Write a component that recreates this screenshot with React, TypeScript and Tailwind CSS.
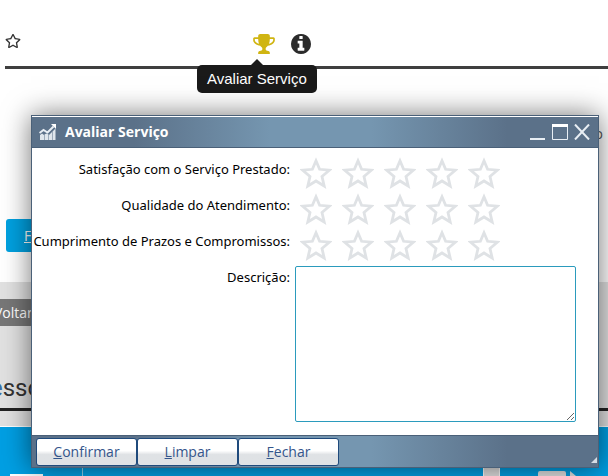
import { FaRegStar } from "react-icons/fa";

const criteria = [
  { id: "servico", label: "Satisfação com o Serviço Prestado:" },
  { id: "atendimento", label: "Qualidade do Atendimento:" },
  { id: "prazos", label: "Cumprimento de Prazos e Compromissos:" },
];

const actions = ["Confirmar", "Limpar", "Fechar"];

function TrophyIcon() {
  return (
    <svg viewBox="64 128 1664 1536" className="h-5 w-[22px]" fill="currentColor" aria-hidden="true">
      <path d="M522 883q-74-162-74-371h-256v96q0 78 94.5 162t235.5 113zm1078-275v-96h-256q0 209-74 371 141-29 235.5-113t94.5-162zm128-128v128q0 71-41.5 143t-112 130-173 97.5-215.5 44.5q-42 54-95 95-38 34-52.5 72.5t-14.5 89.5q0 54 30.5 91t97.5 37q75 0 133.5 45.5t58.5 114.5v64q0 14-9 23t-23 9h-832q-14 0-23-9t-9-23v-64q0-69 58.5-114.5t133.5-45.5q67 0 97.5-37t30.5-91q0-51-14.5-89.5t-52.5-72.5q-53-41-95-95-113-5-215.5-44.5t-173-97.5-112-130-41.5-143v-128q0-40 28-68t68-28h288v-96q0-66 47-113t113-47h576q66 0 113 47t47 113v96h288q40 0 68 28t28 68z" />
    </svg>
  );
}

function InfoIcon() {
  return (
    <svg viewBox="128 128 1536 1536" className="h-5 w-5" fill="currentColor" aria-hidden="true">
      <path d="M1152 1376v-160q0-14-9-23t-23-9h-96v-512q0-14-9-23t-23-9h-320q-14 0-23 9t-9 23v160q0 14 9 23t23 9h96v320h-96q-14 0-23 9t-9 23v160q0 14 9 23t23 9h448q14 0 23-9t9-23zm-128-896v-160q0-14-9-23t-23-9h-192q-14 0-23 9t-9 23v160q0 14 9 23t23 9h192q14 0 23-9t9-23zm640 416q0 209-103 385.5t-279.5 279.5-385.5 103-385.5-103-279.5-279.5-103-385.5 103-385.5 279.5-279.5 385.5-103 385.5 103 279.5 279.5 103 385.5z" />
    </svg>
  );
}

function ChartIcon() {
  return (
    <svg viewBox="0 0 18 18" className="h-[18px] w-[18px]" aria-hidden="true">
      <path
        d="M1 17v-5l2-1.500 2 1.500v5zM5.500 17v-5.500l2-1 2 1V17zM10 17v-5l3-3v8zM13.500 17V8.500l3-3V17z"
        fill="#dfe6ec"
      />
      <path d="M.5 10L4.500 7l4 2.500 6-6" fill="none" stroke="#e8eef4" strokeWidth="2" />
      <path d="M12 1h5v5z" fill="#fff" />
    </svg>
  );
}

function StarRating({ name, label }: { name: string; label: string }) {
  return (
    <div role="radiogroup" aria-label={label} className="flex gap-[10px] pl-[5px]">
      {[1, 2, 3, 4, 5].map((n) => (
        <label key={n} className="relative cursor-pointer">
          <input
            type="radio"
            name={name}
            value={n}
            aria-label={`${n}`}
            className="absolute inset-0 m-0 appearance-none"
          />
          <svg viewBox="0 0 32 32" className="h-8 w-8" aria-hidden="true">
            <path
              d="M16 3.800L19.600 12.300 29.300 13.200 22 19.500 24.200 29 16 24 7.800 29 10 19.500 2.700 13.200 12.400 12.300Z"
              fill="none"
              stroke="#dfe2e5"
              strokeWidth="2.800"
            />
          </svg>
        </label>
      ))}
    </div>
  );
}

function RatingDialog() {
  return (
    <section
      role="dialog"
      aria-labelledby="dialog-title"
      className="absolute left-[31px] right-[9px] top-[115px] border border-[#4a6078] bg-white shadow-[0_0_26px_rgba(0,0,0,0.55)]"
    >
      <header className="flex h-8 items-center border-b border-t border-b-[#4a6078] border-t-white bg-[linear-gradient(to_right,#5b7189_18%,#7596b0_42%,#7596b0_60%,#5b7189_84%)] px-[7px]">
        <ChartIcon />
        <h2
          id="dialog-title"
          className="ml-2 flex-1 font-['Open_Sans',sans-serif] text-sm font-bold text-white"
        >
          Avaliar Serviço
        </h2>
        <div className="flex gap-[6px] pr-px text-[#e8eef4]">
          <button type="button" aria-label="Minimizar">
            <svg viewBox="0 0 16 16" className="h-4 w-4" aria-hidden="true">
              <path d="M0 15h15" stroke="currentColor" strokeWidth="2" />
            </svg>
          </button>
          <button type="button" aria-label="Maximizar">
            <svg viewBox="0 0 16 16" className="h-4 w-4" aria-hidden="true">
              <path d="M.5 1v14.500h15V1" fill="none" stroke="currentColor" />
              <path d="M0 1.500h16" stroke="#fff" strokeWidth="3" />
            </svg>
          </button>
          <button type="button" aria-label="Fechar janela">
            <svg viewBox="0 0 16 16" className="h-4 w-4" aria-hidden="true">
              <path d="M1 .5l14 15M15 .5l-14 15" stroke="currentColor" strokeWidth="2" />
            </svg>
          </button>
        </div>
      </header>

      <form>
        <div className="pb-[13px] pt-[3px] font-['Noto_Sans',sans-serif] text-[13px] text-black">
          {criteria.map((c) => (
            <div key={c.id} className="grid h-9 grid-cols-[258px_1fr] items-center gap-[5px]">
              <span className="whitespace-nowrap text-right">{c.label}</span>
              <div className="pt-[6px]">
                <StarRating name={c.id} label={c.label} />
              </div>
            </div>
          ))}
          <div className="grid grid-cols-[258px_1fr] gap-[5px] pr-[22px] pt-[7px]">
            <label htmlFor="descricao" className="pt-[2px] text-right">
              Descrição:
            </label>
            <textarea
              id="descricao"
              className="block h-[156px] w-full resize rounded-[2px] border border-[#2b9bbd] bg-white p-1 outline-none"
            />
          </div>
        </div>

        <footer className="relative flex h-8 items-center border-t border-[#4a6078] bg-[linear-gradient(to_right,#5b7189_18%,#7596b0_42%,#7596b0_60%,#5b7189_84%)] pl-1">
          {actions.map((a) => (
            <button
              key={a}
              type="button"
              className="h-7 w-[101px] rounded-[3px] border border-[#1f4a7c] bg-linear-to-b from-white from-45% to-[#dfe2e5] to-60% font-['Open_Sans',sans-serif] text-sm text-[#34558b]"
            >
              <span className="underline">{a[0]}</span>
              {a.slice(1)}
            </button>
          ))}
          <svg
            viewBox="0 0 6 6"
            className="absolute bottom-1 right-px h-[6px] w-[6px]"
            aria-hidden="true"
          >
            <path d="M0 6L6 0v6z" fill="#d5dde5" />
          </svg>
        </footer>
      </form>
    </section>
  );
}

export default function App() {
  return (
    <div className="relative flex min-h-screen flex-col overflow-hidden bg-white font-['Open_Sans',sans-serif]">
      <header className="ml-[5px] flex h-[69px] items-end border-b-[3px] border-[#3f3f3f] pb-3">
        <button type="button" aria-label="Favorito" className="pb-[5px] text-[#333]">
          <FaRegStar className="h-4 w-4" />
        </button>
        <div className="ml-[232px] flex gap-4">
          <div className="relative">
            <button type="button" aria-label="Avaliar Serviço" className="block text-[#d0b512]">
              <TrophyIcon />
            </button>
            {/* tooltip under the trophy */}
            <div
              role="tooltip"
              className="absolute -left-14 top-[31px] whitespace-nowrap rounded-[5px] bg-[#1a1a1a] px-[10px] py-1 font-['Liberation_Sans',sans-serif] text-[15px] leading-5 text-white"
            >
              <span className="absolute -top-[6px] left-1/2 -translate-x-1/2 border-x-[6px] border-b-[6px] border-x-transparent border-b-[#1a1a1a]" />
              Avaliar Serviço
            </div>
          </div>
          <button type="button" aria-label="Informações" className="text-[#2b2b2b]">
            <InfoIcon />
          </button>
        </div>
      </header>

      <main className="flex flex-1 flex-col">
        <p className="pr-[5px] pt-[55px] text-right text-sm leading-5 text-[#555]">o</p>
        <div className="pb-[30px] pl-[6px] pt-[75px]">
          <button
            type="button"
            className="h-[33px] w-24 rounded-[3px] bg-[#00a1e0] pl-[18px] text-left text-sm text-white underline"
          >
            F
          </button>
        </div>

        <div className="flex flex-1 flex-col bg-[#e1e1e1] pt-[17px]">
          <a
            href="#voltar"
            className="-ml-2 block h-[27px] w-24 bg-[#777] pl-[2px] text-sm leading-[27px] text-white"
          >
            Voltar
          </a>
          <h1 className="-ml-[10px] mt-[42px] border-b-[3px] border-[#222] font-[Roboto,sans-serif] text-2xl leading-[40px] text-[#333]">
            <span className="text-[#3a6ea5]">e</span>sso
          </h1>
          <div className="mt-[15px] flex flex-1 gap-[15px]">
            <div className="flex w-[484px] border-r border-t border-white bg-[#009fe3]">
              <div className="flex w-[83px] items-end border-r border-[#8fd3f0] pl-[10px]">
                <span className="h-[2px] w-[33px] bg-white" />
              </div>
            </div>
            <div className="flex flex-1 items-end border-l border-t border-white bg-[#009fe3] pl-[38px]">
              <span className="h-[5px] w-7 rounded-t-[2px] bg-[#e1e1e1]" />
              <svg viewBox="0 0 6 5" className="ml-1 h-[5px] w-[6px]" aria-hidden="true">
                <path d="M0 0l6 5H0z" fill="#e1e1e1" />
              </svg>
            </div>
          </div>
        </div>
      </main>

      <RatingDialog />
    </div>
  );
}
